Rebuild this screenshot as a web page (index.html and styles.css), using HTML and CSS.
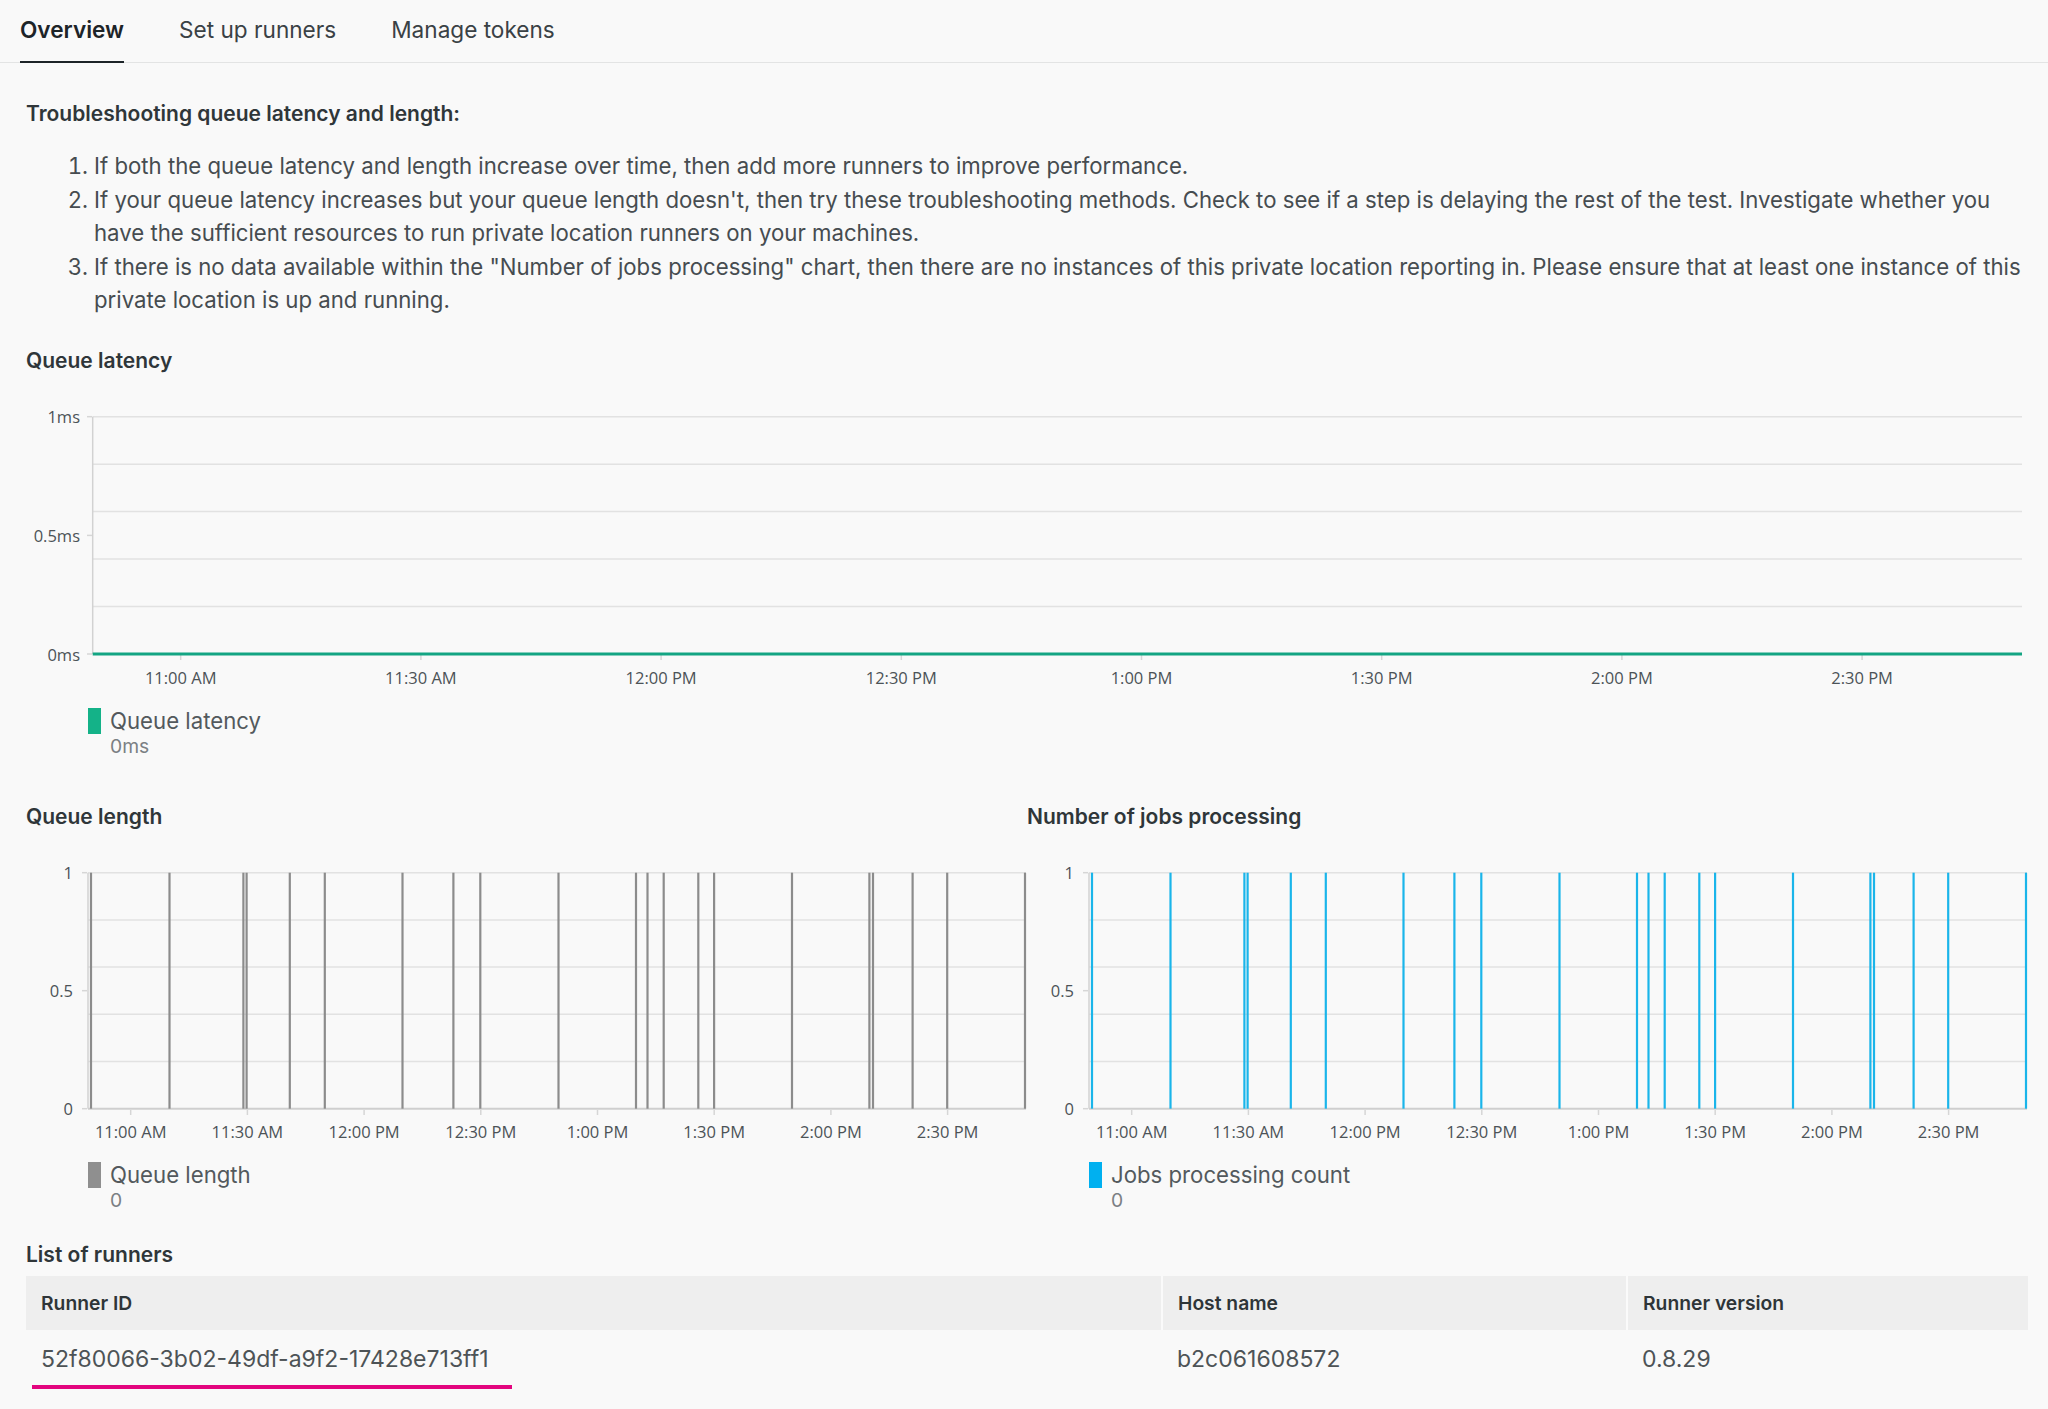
FILE: index.html
```html
<!DOCTYPE html>
<html lang="en">
<head>
<meta charset="utf-8">
<title>Private location overview</title>
<link rel="stylesheet" href="styles.css">
</head>
<body>
<nav class="tabs">
  <div class="tab active">Overview</div>
  <div class="tab">Set up runners</div>
  <div class="tab">Manage tokens</div>
</nav>
<main class="content">
  <h3 class="heading">Troubleshooting queue latency and length:</h3>
  <ol class="tips">
    <li>If both the queue latency and length increase over time, then add more runners to improve performance.</li>
    <li>If your queue latency increases but your queue length doesn't, then try these troubleshooting methods. Check to see if a step is delaying the rest of the test. Investigate whether you have the sufficient resources to run private location runners on your machines.</li>
    <li>If there is no data available within the "Number of jobs processing" chart, then there are no instances of this private location reporting in. Please ensure that at least one instance of this private location is up and running.</li>
  </ol>

  <section class="chart-block">
    <h3 class="chart-title">Queue latency</h3>
    <svg class="chart" width="2001" height="290" viewBox="0 0 2001 290">
      <g class="grid">
        <line x1="66.7" y1="15.7" x2="1996" y2="15.7"/>
        <line x1="66.7" y1="63.2" x2="1996" y2="63.2"/>
        <line x1="66.7" y1="110.6" x2="1996" y2="110.6"/>
        <line x1="66.7" y1="158.1" x2="1996" y2="158.1"/>
        <line x1="66.7" y1="205.5" x2="1996" y2="205.5"/>
      </g>
      <line class="axis" x1="66.7" y1="15.7" x2="66.7" y2="253"/>
      <g class="ticks">
        <line x1="61" y1="15.7" x2="66" y2="15.7"/>
        <line x1="61" y1="134.4" x2="66" y2="134.4"/>
        <line x1="61" y1="253" x2="66" y2="253"/>
        <line x1="154.7" y1="254" x2="154.7" y2="259"/>
        <line x1="394.9" y1="254" x2="394.9" y2="259"/>
        <line x1="635.1" y1="254" x2="635.1" y2="259"/>
        <line x1="875.3" y1="254" x2="875.3" y2="259"/>
        <line x1="1115.5" y1="254" x2="1115.5" y2="259"/>
        <line x1="1355.7" y1="254" x2="1355.7" y2="259"/>
        <line x1="1595.9" y1="254" x2="1595.9" y2="259"/>
        <line x1="1836.1" y1="254" x2="1836.1" y2="259"/>
      </g>
      <line class="series-green" x1="66.7" y1="253" x2="1996" y2="253"/>
      <g class="y-labels">
        <text x="54" y="15.7">1ms</text>
        <text x="54" y="134.4">0.5ms</text>
        <text x="54" y="253">0ms</text>
      </g>
      <g class="x-labels">
        <text x="154.7" y="276">11:00 AM</text>
        <text x="394.9" y="276">11:30 AM</text>
        <text x="635.1" y="276">12:00 PM</text>
        <text x="875.3" y="276">12:30 PM</text>
        <text x="1115.5" y="276">1:00 PM</text>
        <text x="1355.7" y="276">1:30 PM</text>
        <text x="1595.9" y="276">2:00 PM</text>
        <text x="1836.1" y="276">2:30 PM</text>
      </g>
    </svg>
    <div class="legend">
      <span class="swatch swatch-green"></span>
      <div class="legend-text">
        <div class="legend-label">Queue latency</div>
        <div class="legend-value">0ms</div>
      </div>
    </div>
  </section>

  <div class="chart-row">
    <section class="chart-block">
      <h3 class="chart-title">Queue length</h3>
      <svg class="chart" width="1000" height="290" viewBox="0 0 1000 290">
        <g class="grid">
          <line x1="62" y1="15.7" x2="1000" y2="15.7"/>
          <line x1="62" y1="62.9" x2="1000" y2="62.9"/>
          <line x1="62" y1="110.1" x2="1000" y2="110.1"/>
          <line x1="62" y1="157.3" x2="1000" y2="157.3"/>
          <line x1="62" y1="204.5" x2="1000" y2="204.5"/>
        </g>
        <line class="axis" x1="62" y1="15.7" x2="62" y2="251.7"/>
        <line class="baseline" x1="62" y1="251.7" x2="1000" y2="251.7"/>
        <g class="ticks">
          <line x1="56" y1="15.7" x2="61" y2="15.7"/>
          <line x1="56" y1="133.7" x2="61" y2="133.7"/>
          <line x1="56" y1="251.7" x2="61" y2="251.7"/>
          <line x1="104.7" y1="253" x2="104.7" y2="258"/>
          <line x1="221.4" y1="253" x2="221.4" y2="258"/>
          <line x1="338.1" y1="253" x2="338.1" y2="258"/>
          <line x1="454.8" y1="253" x2="454.8" y2="258"/>
          <line x1="571.5" y1="253" x2="571.5" y2="258"/>
          <line x1="688.2" y1="253" x2="688.2" y2="258"/>
          <line x1="804.9" y1="253" x2="804.9" y2="258"/>
          <line x1="921.6" y1="253" x2="921.6" y2="258"/>
        </g>
        <g class="spikes spikes-gray">
          <line x1="65" y1="15.7" x2="65" y2="251.7"/>
          <line x1="143.5" y1="15.7" x2="143.5" y2="251.7"/>
          <line x1="217.4" y1="15.7" x2="217.4" y2="251.7"/>
          <line x1="220.6" y1="15.7" x2="220.6" y2="251.7"/>
          <line x1="263.8" y1="15.7" x2="263.8" y2="251.7"/>
          <line x1="298.8" y1="15.7" x2="298.8" y2="251.7"/>
          <line x1="376.5" y1="15.7" x2="376.5" y2="251.7"/>
          <line x1="427.4" y1="15.7" x2="427.4" y2="251.7"/>
          <line x1="454.3" y1="15.7" x2="454.3" y2="251.7"/>
          <line x1="532.5" y1="15.7" x2="532.5" y2="251.7"/>
          <line x1="610" y1="15.7" x2="610" y2="251.7"/>
          <line x1="621.5" y1="15.7" x2="621.5" y2="251.7"/>
          <line x1="637.7" y1="15.7" x2="637.7" y2="251.7"/>
          <line x1="672.3" y1="15.7" x2="672.3" y2="251.7"/>
          <line x1="688.1" y1="15.7" x2="688.1" y2="251.7"/>
          <line x1="766" y1="15.7" x2="766" y2="251.7"/>
          <line x1="843.4" y1="15.7" x2="843.4" y2="251.7"/>
          <line x1="847" y1="15.7" x2="847" y2="251.7"/>
          <line x1="886.6" y1="15.7" x2="886.6" y2="251.7"/>
          <line x1="921.2" y1="15.7" x2="921.2" y2="251.7"/>
          <line x1="999" y1="15.7" x2="999" y2="251.7"/>
        </g>
        <g class="y-labels">
          <text x="47" y="15.7">1</text>
          <text x="47" y="133.7">0.5</text>
          <text x="47" y="251.7">0</text>
        </g>
        <g class="x-labels">
          <text x="104.7" y="274.7">11:00 AM</text>
          <text x="221.4" y="274.7">11:30 AM</text>
          <text x="338.1" y="274.7">12:00 PM</text>
          <text x="454.8" y="274.7">12:30 PM</text>
          <text x="571.5" y="274.7">1:00 PM</text>
          <text x="688.2" y="274.7">1:30 PM</text>
          <text x="804.9" y="274.7">2:00 PM</text>
          <text x="921.6" y="274.7">2:30 PM</text>
        </g>
      </svg>
      <div class="legend">
        <span class="swatch swatch-gray"></span>
        <div class="legend-text">
          <div class="legend-label">Queue length</div>
          <div class="legend-value">0</div>
        </div>
      </div>
    </section>

    <section class="chart-block">
      <h3 class="chart-title">Number of jobs processing</h3>
      <svg class="chart" width="1000" height="290" viewBox="0 0 1000 290">
        <g class="grid">
          <line x1="62" y1="15.7" x2="1000" y2="15.7"/>
          <line x1="62" y1="62.9" x2="1000" y2="62.9"/>
          <line x1="62" y1="110.1" x2="1000" y2="110.1"/>
          <line x1="62" y1="157.3" x2="1000" y2="157.3"/>
          <line x1="62" y1="204.5" x2="1000" y2="204.5"/>
        </g>
        <line class="axis" x1="62" y1="15.7" x2="62" y2="251.7"/>
        <line class="baseline" x1="62" y1="251.7" x2="1000" y2="251.7"/>
        <g class="ticks">
          <line x1="56" y1="15.7" x2="61" y2="15.7"/>
          <line x1="56" y1="133.7" x2="61" y2="133.7"/>
          <line x1="56" y1="251.7" x2="61" y2="251.7"/>
          <line x1="104.7" y1="253" x2="104.7" y2="258"/>
          <line x1="221.4" y1="253" x2="221.4" y2="258"/>
          <line x1="338.1" y1="253" x2="338.1" y2="258"/>
          <line x1="454.8" y1="253" x2="454.8" y2="258"/>
          <line x1="571.5" y1="253" x2="571.5" y2="258"/>
          <line x1="688.2" y1="253" x2="688.2" y2="258"/>
          <line x1="804.9" y1="253" x2="804.9" y2="258"/>
          <line x1="921.6" y1="253" x2="921.6" y2="258"/>
        </g>
        <g class="spikes spikes-blue">
          <line x1="65" y1="15.7" x2="65" y2="251.7"/>
          <line x1="143.5" y1="15.7" x2="143.5" y2="251.7"/>
          <line x1="217.4" y1="15.7" x2="217.4" y2="251.7"/>
          <line x1="220.6" y1="15.7" x2="220.6" y2="251.7"/>
          <line x1="263.8" y1="15.7" x2="263.8" y2="251.7"/>
          <line x1="298.8" y1="15.7" x2="298.8" y2="251.7"/>
          <line x1="376.5" y1="15.7" x2="376.5" y2="251.7"/>
          <line x1="427.4" y1="15.7" x2="427.4" y2="251.7"/>
          <line x1="454.3" y1="15.7" x2="454.3" y2="251.7"/>
          <line x1="532.5" y1="15.7" x2="532.5" y2="251.7"/>
          <line x1="610" y1="15.7" x2="610" y2="251.7"/>
          <line x1="621.5" y1="15.7" x2="621.5" y2="251.7"/>
          <line x1="637.7" y1="15.7" x2="637.7" y2="251.7"/>
          <line x1="672.3" y1="15.7" x2="672.3" y2="251.7"/>
          <line x1="688.1" y1="15.7" x2="688.1" y2="251.7"/>
          <line x1="766" y1="15.7" x2="766" y2="251.7"/>
          <line x1="843.4" y1="15.7" x2="843.4" y2="251.7"/>
          <line x1="847" y1="15.7" x2="847" y2="251.7"/>
          <line x1="886.6" y1="15.7" x2="886.6" y2="251.7"/>
          <line x1="921.2" y1="15.7" x2="921.2" y2="251.7"/>
          <line x1="999" y1="15.7" x2="999" y2="251.7"/>
        </g>
        <g class="y-labels">
          <text x="47" y="15.7">1</text>
          <text x="47" y="133.7">0.5</text>
          <text x="47" y="251.7">0</text>
        </g>
        <g class="x-labels">
          <text x="104.7" y="274.7">11:00 AM</text>
          <text x="221.4" y="274.7">11:30 AM</text>
          <text x="338.1" y="274.7">12:00 PM</text>
          <text x="454.8" y="274.7">12:30 PM</text>
          <text x="571.5" y="274.7">1:00 PM</text>
          <text x="688.2" y="274.7">1:30 PM</text>
          <text x="804.9" y="274.7">2:00 PM</text>
          <text x="921.6" y="274.7">2:30 PM</text>
        </g>
      </svg>
      <div class="legend">
        <span class="swatch swatch-blue"></span>
        <div class="legend-text">
          <div class="legend-label">Jobs processing count</div>
          <div class="legend-value">0</div>
        </div>
      </div>
    </section>
  </div>

  <h3 class="table-title">List of runners</h3>
  <table class="runners">
    <thead>
      <tr>
        <th class="col-id">Runner ID</th>
        <th class="col-host">Host name</th>
        <th class="col-version">Runner version</th>
      </tr>
    </thead>
    <tbody>
      <tr>
        <td class="runner-id">52f80066-3b02-49df-a9f2-17428e713ff1</td>
        <td>b2c061608572</td>
        <td>0.8.29</td>
      </tr>
    </tbody>
  </table>
</main>
</body>
</html>
```

FILE: styles.css
```css
html, body {
  margin: 0;
  padding: 0;
}

body {
  background: #f9f9f9;
  font-family: Inter, "Noto Sans", "Liberation Sans", sans-serif;
  color: #464c50;
  width: 2048px;
  overflow: hidden;
}

/* Tabs */
.tabs {
  display: flex;
  align-items: flex-start;
  gap: 55px;
  height: 62px;
  padding-left: 20px;
  border-bottom: 1px solid #e3e4e4;
}

.tab {
  box-sizing: border-box;
  height: 63px;
  font-size: 22.6px;
  line-height: 59px;
  color: #3a4145;
  border-bottom: 2px solid transparent;
}

.tab.active {
  font-weight: 600;
  color: #1d2428;
  border-bottom-color: #1d2428;
}

/* Content */
.content {
  padding: 0 21px 40px 26px;
}

.heading,
.chart-title,
.table-title {
  margin: 0;
  font-size: 21px;
  line-height: 24px;
  font-weight: 600;
  color: #2f3639;
}

.heading {
  margin-top: 39px;
}

.tips {
  margin: 23px -12px 0 0;
  padding-left: 68px;
  font-size: 22.2px;
  line-height: 33.6px;
  color: #464c50;
}

.chart-title {
  margin-top: 32px;
}

.chart {
  display: block;
  margin-top: 28px;
  overflow: visible;
}

.chart .grid line {
  stroke: #e2e2e2;
  stroke-width: 1.5;
}

.chart .axis {
  stroke: #d2d2d2;
  stroke-width: 1.5;
}

.chart .baseline {
  stroke: #cfcfcf;
  stroke-width: 2;
}

.chart .ticks line {
  stroke: #d6d6d6;
  stroke-width: 1.5;
}

.chart .series-green {
  stroke: #14a583;
  stroke-width: 3;
}

.spikes line {
  stroke-width: 2.2;
}

.spikes-gray line {
  stroke: #8c8c8c;
}

.spikes-blue line {
  stroke: #1ab5ea;
}

.chart text {
  font-family: "Open Sans", "Noto Sans", sans-serif;
  font-size: 16.5px;
  fill: #4c5357;
  dominant-baseline: central;
}

.y-labels text {
  text-anchor: end;
}

.x-labels text {
  text-anchor: middle;
}

/* Legend */
.legend {
  display: flex;
  align-items: flex-start;
  gap: 9px;
  margin-top: 17px;
  margin-left: 62px;
}

.swatch {
  display: block;
  width: 13px;
  height: 26px;
}

.swatch-green { background: #14b288; }
.swatch-gray { background: #8f8f8f; }
.swatch-blue { background: #00b0f0; }

.legend-label {
  font-size: 22.2px;
  line-height: 26px;
  color: #53595d;
}

.legend-value {
  font-size: 19.3px;
  line-height: 24px;
  color: #7b8084;
}

/* Two-column charts */
.chart-row {
  display: grid;
  grid-template-columns: 1000px 1000px;
  column-gap: 1px;
  margin-top: 47px;
}

.chart-row .chart-title {
  margin-top: 0;
}

.chart-row .legend {
  margin-top: 15px;
}

/* Runners table */
.table-title {
  margin-top: 31px;
}

.runners {
  margin-top: 9px;
  width: 2002px;
  border-collapse: collapse;
  table-layout: fixed;
}

.runners th,
.runners td {
  box-sizing: border-box;
}

.runners th {
  height: 54px;
  padding: 0 15px;
  background: #eeeeee;
  text-align: left;
  font-size: 19.3px;
  font-weight: 600;
  color: #2e3538;
}

.runners th + th {
  border-left: 2px solid #fafafa;
}

.col-id { width: 1136px; }
.col-host { width: 465px; }
.col-version { width: 401px; }

.runners td {
  height: 58px;
  padding: 0 15px;
  font-size: 23px;
  color: #4d5356;
  vertical-align: middle;
}

.runner-id {
  position: relative;
}

.runner-id::after {
  content: "";
  position: absolute;
  left: 6px;
  top: 55px;
  width: 480px;
  height: 4px;
  background: #e3057f;
}
```
